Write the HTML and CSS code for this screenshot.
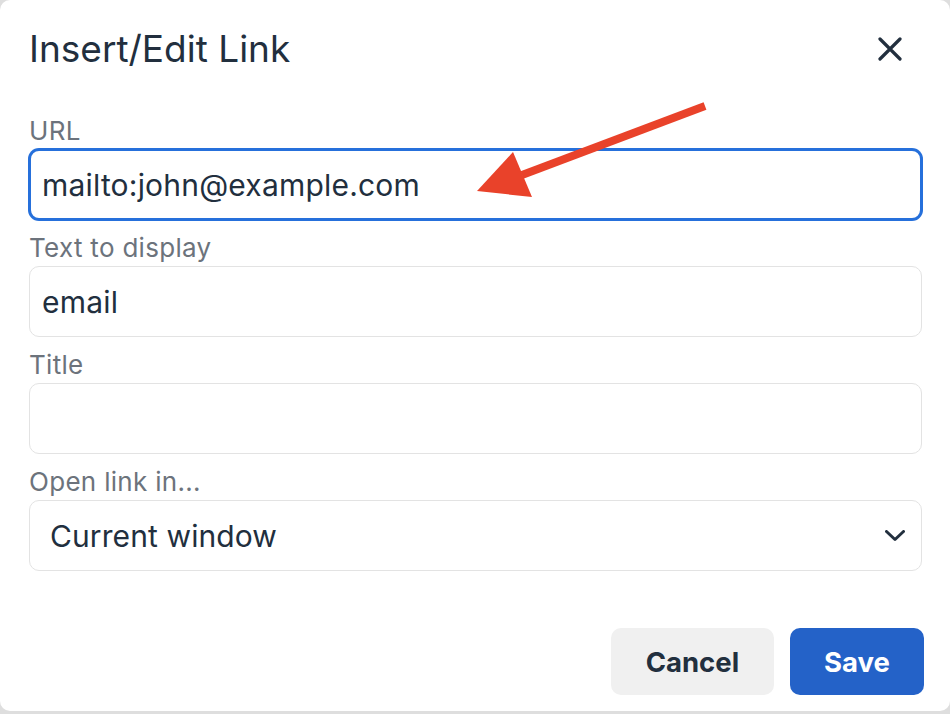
FILE: index.html
```html
<!DOCTYPE html>
<html lang="en">
<head>
<meta charset="utf-8">
<title>Insert/Edit Link</title>
<link rel="stylesheet" href="styles.css">
</head>
<body>
<div class="dialog">
  <div class="header">
    <h1 class="title">Insert/Edit Link</h1>
    <button class="close" aria-label="Close">
      <svg width="24" height="24" viewBox="0 0 24 24"><path d="M2 2 L22 22 M22 2 L2 22" stroke="#222f3e" stroke-width="3.2" stroke-linecap="round" fill="none"/></svg>
    </button>
  </div>
  <div class="form">
    <div class="field">
      <label class="label">URL</label>
      <input class="input is-focused" type="text" value="mailto:john@example.com">
    </div>
    <div class="field">
      <label class="label">Text to display</label>
      <input class="input" type="text" value="email">
    </div>
    <div class="field">
      <label class="label">Title</label>
      <input class="input" type="text" value="">
    </div>
    <div class="field">
      <label class="label">Open link in...</label>
      <div class="select">
        <span>Current window</span>
        <svg width="20" height="12" viewBox="0 0 20 12"><path d="M1.5 1.5 L10 9.5 L18.5 1.5" stroke="#222f3e" stroke-width="3" stroke-linecap="round" stroke-linejoin="round" fill="none"/></svg>
      </div>
    </div>
  </div>
  <div class="footer">
    <button class="btn btn-secondary">Cancel</button>
    <button class="btn btn-primary">Save</button>
  </div>
  <svg class="annotation" width="950" height="711" viewBox="0 0 950 711">
    <line x1="705" y1="106" x2="522" y2="175" stroke="#e9422a" stroke-width="8"/>
    <polygon points="513,152 477,191 532,197" fill="#e9422a"/>
  </svg>
</div>
</body>
</html>
```
FILE: styles.css
```css
html, body {
  margin: 0;
  padding: 0;
}
body {
  background: #dedede;
  font-family: Inter, "Noto Sans", "Liberation Sans", sans-serif;
  color: #222f3e;
  width: 950px;
  height: 714px;
  overflow: hidden;
}
.dialog {
  position: relative;
  width: 950px;
  height: 711px;
  background: #ffffff;
  border-radius: 10px;
  box-sizing: border-box;
  display: flex;
  flex-direction: column;
}
.header {
  display: flex;
  justify-content: space-between;
  align-items: center;
  padding: 26px 48px 0 29px;
}
.title {
  margin: 0;
  font-size: 37px;
  font-weight: 400;
  line-height: 46px;
  color: #222f3e;
}
.close {
  border: 0;
  background: none;
  padding: 0;
  width: 24px;
  height: 24px;
  display: flex;
}
.form {
  display: flex;
  flex-direction: column;
  gap: 13px;
  padding: 44px 28px 0 29px;
}
.field {
  display: flex;
  flex-direction: column;
}
.label {
  font-size: 26px;
  letter-spacing: 0.3px;
  line-height: 29px;
  margin-bottom: 4px;
  color: #6c737c;
}
.input {
  box-sizing: border-box;
  height: 71px;
  width: 100%;
  border: 1px solid #e3e3e3;
  border-radius: 10px;
  padding: 0 12px;
  font-family: Inter, "Noto Sans", "Liberation Sans", sans-serif;
  font-size: 30px;
  letter-spacing: 0.2px;
  color: #222f3e;
  background: #fff;
  outline: none;
}
.input.is-focused {
  border: 2px solid #2670db;
  padding: 0 11px;
  box-shadow: 0 0 0 1px #2670db;
}
.select {
  box-sizing: border-box;
  height: 71px;
  border: 1px solid #e3e3e3;
  border-radius: 10px;
  padding: 0 16px 0 20px;
  display: flex;
  align-items: center;
  justify-content: space-between;
  font-size: 30px;
  letter-spacing: 0.1px;
  color: #222f3e;
}
.footer {
  display: flex;
  justify-content: flex-end;
  gap: 16px;
  padding: 57px 26px 0 0;
}
.btn {
  height: 67px;
  border: 0;
  border-radius: 10px;
  font-family: Inter, "Noto Sans", "Liberation Sans", sans-serif;
  font-size: 27.5px;
  font-weight: 700;
  padding: 0 35px;
}
.btn-secondary {
  background: #f0f0f0;
  color: #222f3e;
}
.btn-primary {
  background: #2462c8;
  color: #ffffff;
  padding: 0 34px;
}
.annotation {
  position: absolute;
  left: 0;
  top: 0;
  pointer-events: none;
}
```
